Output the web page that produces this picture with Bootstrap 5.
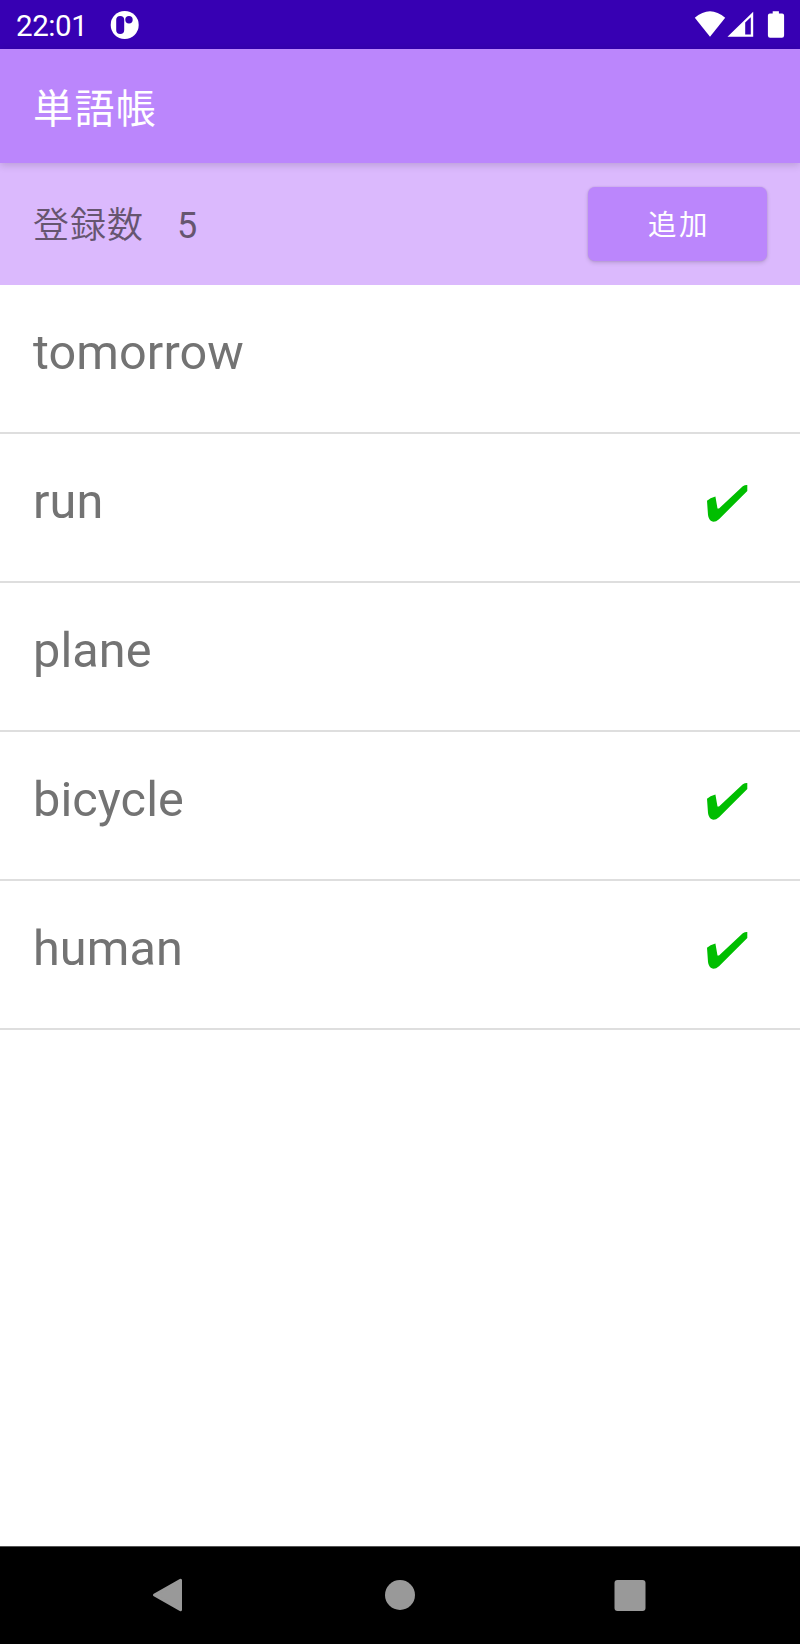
<!DOCTYPE html>
<html lang="ja">
<head>
<meta charset="utf-8">
<meta name="viewport" content="width=device-width, initial-scale=1">
<title>単語帳</title>
<link rel="stylesheet" href="https://cdn.jsdelivr.net/npm/bootstrap@5.3.0/dist/css/bootstrap.min.css">
<style>
body { font-family: Roboto, "Noto Sans CJK JP", sans-serif; }
.screen { height: 1644px; overflow: hidden; }
.status-bar { height: 49px; background: #3700b3; padding: 0 14px 0 16px; font-size: 29.5px; line-height: 49px; letter-spacing: -.4px; }
.status-bar svg, .nav-keys svg, .tick { display: block; flex: none; }
.clock { width: 94px; padding-top: 3px; }
.app-bar { height: 114px; background: #bb86fc; padding: 0 33px; z-index: 1; box-shadow: 0 2px 8px rgba(0,0,0,.16); }
.app-title { font-size: 40px; letter-spacing: 1.4px; line-height: 60px; padding-top: 7px; }
.count-bar { height: 122px; background: #dbb9fd; padding: 0 33px; color: #66556f; font-size: 36px; letter-spacing: 1px; }
.count-label { font-weight: 350; padding-top: 4px; }
.count-num { margin-left: 33px; padding-top: 4px; }
.btn-add { width: 179px; height: 74px; background: #bb86fc; border: 0; border-radius: 7px; font-size: 28.5px; letter-spacing: 2.4px; line-height: 74px; padding: 2px 0 0 3px; box-shadow: 0 2px 4px rgba(0,0,0,.15), 0 0 2px rgba(0,0,0,.14); }
.word-row { height: 149px; border-bottom: 2px solid #dedede; padding: 36px 50px 0 33px; font-size: 48.6px; line-height: 64px; color: #737373; letter-spacing: .1px; }
.word-row:first-child { height: 148.6px; }
.tick { margin-top: 14px; }
.nav-keys { height: 98px; background: #000; border-top: 1px solid #555; padding: 0 152px 2px; }
</style>
</head>
<body>
<div class="screen d-flex flex-column bg-white">
  <div class="status-bar d-flex align-items-center text-white">
    <span class="clock">22:01</span>
    <svg width="30" height="30" viewBox="0 0 30 30"><circle cx="14.7" cy="15" r="14" fill="#fff"/><rect x="6.2" y="6" width="8" height="18" rx="4" fill="#3700b3"/><circle cx="19" cy="9.7" r="3.7" fill="#3700b3"/></svg>
    <svg class="ms-auto" width="92" height="30" viewBox="694 10 92 30" fill="#fff"><path d="M694.8 17.8Q710 4.8 725.2 17.8L710 36.7Z"/><path fill-rule="evenodd" d="M727.5 36.8L753.2 11.7V36.8ZM745.2 22.5V34.6H750.8V17.3Z"/><path d="M772.7 11.2h6.2v2.3h3.2a2 2 0 0 1 2 2v20a2.2 2.2 0 0 1-2.2 2.2h-11.8a2.2 2.2 0 0 1-2.2-2.2v-20a2 2 0 0 1 2-2h2.8z"/></svg>
  </div>
  <header class="app-bar d-flex align-items-center position-relative text-white"><h1 class="app-title fw-normal mb-0">単語帳</h1></header>
  <section class="count-bar d-flex align-items-center">
    <span class="count-label">登録数</span><span class="count-num">5</span>
    <button class="btn btn-add text-white ms-auto" type="button">追加</button>
  </section>
  <main class="flex-grow-1">
    <div class="word-row d-flex justify-content-between"><span>tomorrow</span></div>
    <div class="word-row d-flex justify-content-between"><span>run</span><svg class="tick" width="44" height="40" viewBox="706 484 44 40"><path fill="#00be00" d="M707 500.7Q710 498 715.4 496.5L717.5 508.5H719L742.8 486.2Q745 484.7 747.3 484.9V491L719 519.2Q715.5 522.2 712.5 521.6Q708.6 520.2 708 515Z"/></svg></div>
    <div class="word-row d-flex justify-content-between"><span>plane</span></div>
    <div class="word-row d-flex justify-content-between"><span>bicycle</span><svg class="tick" width="44" height="40" viewBox="706 484 44 40"><path fill="#00be00" d="M707 500.7Q710 498 715.4 496.5L717.5 508.5H719L742.8 486.2Q745 484.7 747.3 484.9V491L719 519.2Q715.5 522.2 712.5 521.6Q708.6 520.2 708 515Z"/></svg></div>
    <div class="word-row d-flex justify-content-between"><span>human</span><svg class="tick" width="44" height="40" viewBox="706 484 44 40"><path fill="#00be00" d="M707 500.7Q710 498 715.4 496.5L717.5 508.5H719L742.8 486.2Q745 484.7 747.3 484.9V491L719 519.2Q715.5 522.2 712.5 521.6Q708.6 520.2 708 515Z"/></svg></div>
  </main>
  <nav class="nav-keys d-flex align-items-center justify-content-between">
    <svg width="32" height="34" viewBox="0 0 32 34"><path d="M2.5 17L28.5 2.3V31.7Z" fill="#999" stroke="#999" stroke-width="3" stroke-linejoin="round"/></svg>
    <svg width="32" height="32" viewBox="0 0 32 32"><circle cx="17" cy="16" r="15" fill="#999"/></svg>
    <svg width="34" height="32" viewBox="0 0 34 32"><rect x="0.5" y="1" width="31" height="31" rx="3" fill="#999"/></svg>
  </nav>
</div>
<script src="https://cdn.jsdelivr.net/npm/bootstrap@5.3.0/dist/js/bootstrap.bundle.min.js"></script>
</body>
</html>
